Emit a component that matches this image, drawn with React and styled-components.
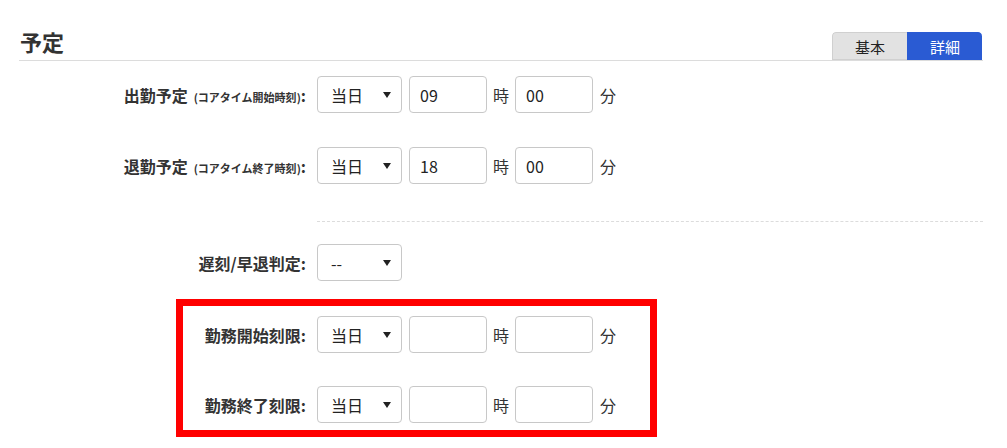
import React from "react";
import styled, { createGlobalStyle } from "styled-components";

const Global = createGlobalStyle`
	body {
		margin: 0;
		background: #fff;
		font-family: "Noto Sans CJK JP", "Noto Sans", sans-serif;
		color: #333;
	}
`

const Page = styled.div`
	position: relative;
	width: 1007px;
	height: 448px;
	overflow: hidden;
`

const Header = styled.div`
	display: flex;
	align-items: flex-end;
	justify-content: space-between;
	height: 60px;
	margin: 0 24px 0 19px;
	border-bottom: 1px solid #dcdcdc;
`

const Title = styled.h2`
	margin: 0 0 8px 1px;
	font-size: 22px;
	line-height: 1;
	font-weight: 700;
	color: #333;
`

const Toggle = styled.div`
	display: flex;
	height: 28px;
	width: 150px;
	margin-right: 1px;
	border-radius: 4px 4px 0 0;
	overflow: hidden;
`

const ToggleButton = styled.div`
	flex: 1;
	display: flex;
	align-items: center;
	justify-content: center;
	font-size: 15px;
	background: ${p => (p.active ? "#2a5bd3" : "#e2e2e2")};
	color: ${p => (p.active ? "#fff" : "#222")};
	border: 1px solid ${p => (p.active ? "#2a5bd3" : "#d0d0d0")};
	border-right: none;
	&:last-child { border-radius: 0 4px 0 0; }
	&:first-child { border-radius: 4px 0 0 0; }
`

const Form = styled.div`
	display: flex;
	flex-direction: column;
`

const Row = styled.div`
	display: grid;
	grid-template-columns: 306px auto;
	column-gap: 11px;
	align-items: center;
	height: 37px;
	margin-top: ${p => p.gap}px;
`

const Label = styled.div`
	text-align: right;
	font-size: 16px;
	font-weight: 700;
	color: #333;
	white-space: nowrap;
`

const Note = styled.span`
	font-size: 11px;
	margin-left: 6px;
`

const Controls = styled.div`
	display: flex;
	align-items: center;
`

const SelectBox = styled.div`
	display: flex;
	align-items: center;
	justify-content: space-between;
	box-sizing: border-box;
	width: 85px;
	height: 37px;
	padding: 0 10px 0 13px;
	margin-right: 7px;
	border: 1px solid #c8c8c8;
	border-radius: 4px;
	font-size: 16px;
	color: #222;
	background: #fff;
`

const Caret = styled.span`
	width: 0;
	height: 0;
	border-left: 4px solid transparent;
	border-right: 4px solid transparent;
	border-top: 6px solid #222;
	margin-top: 1px;
`

const TimeInput = styled.input`
	box-sizing: border-box;
	width: 78px;
	height: 37px;
	padding: 0 10px;
	border: 1px solid #c8c8c8;
	border-radius: 4px;
	font-family: inherit;
	font-size: 16px;
	color: #222;
	outline: none;
`

const Unit = styled.span`
	width: ${p => p.w}px;
	padding-left: ${p => p.pad || 0}px;
	text-align: ${p => (p.pad ? "left" : "center")};
	font-size: 16px;
	color: #333;
`

const Divider = styled.div`
	height: 0;
	margin: 37px 24px 0 317px;
	border-top: 1px dashed #dcdcdc;
`

const Highlight = styled.div`
	position: absolute;
	left: 176px;
	top: 299px;
	width: 481px;
	height: 138px;
	box-sizing: border-box;
	border: 7px solid #ff0000;
	pointer-events: none;
`

function Select({ value }) {
	return (
		<SelectBox>
			<span>{value}</span>
			<Caret />
		</SelectBox>
	);
}

function TimeRow({ gap, label, note, hour, minute }) {
	return (
		<Row gap={gap}>
			<Label>
				{label}
				{note && <Note>({note})</Note>}:
			</Label>
			<Controls>
				<Select value="当日" />
				<TimeInput defaultValue={hour} readOnly />
				<Unit w={28}>時</Unit>
				<TimeInput defaultValue={minute} readOnly />
				<Unit w={24} pad={7}>分</Unit>
			</Controls>
		</Row>
	);
}

export default function App() {
	return (
		<Page>
			<Global />
			<Header>
				<Title>予定</Title>
				<Toggle>
					<ToggleButton>基本</ToggleButton>
					<ToggleButton active>詳細</ToggleButton>
				</Toggle>
			</Header>
			<Form>
				<TimeRow gap={15} label="出勤予定" note="コアタイム開始時刻" hour="09" minute="00" />
				<TimeRow gap={34} label="退勤予定" note="コアタイム終了時刻" hour="18" minute="00" />
				<Divider />
				<Row gap={22}>
					<Label>遅刻/早退判定:</Label>
					<Controls>
						<Select value="--" />
					</Controls>
				</Row>
				<TimeRow gap={35} label="勤務開始刻限" hour="" minute="" />
				<TimeRow gap={33} label="勤務終了刻限" hour="" minute="" />
			</Form>
			<Highlight />
		</Page>
	);
}
